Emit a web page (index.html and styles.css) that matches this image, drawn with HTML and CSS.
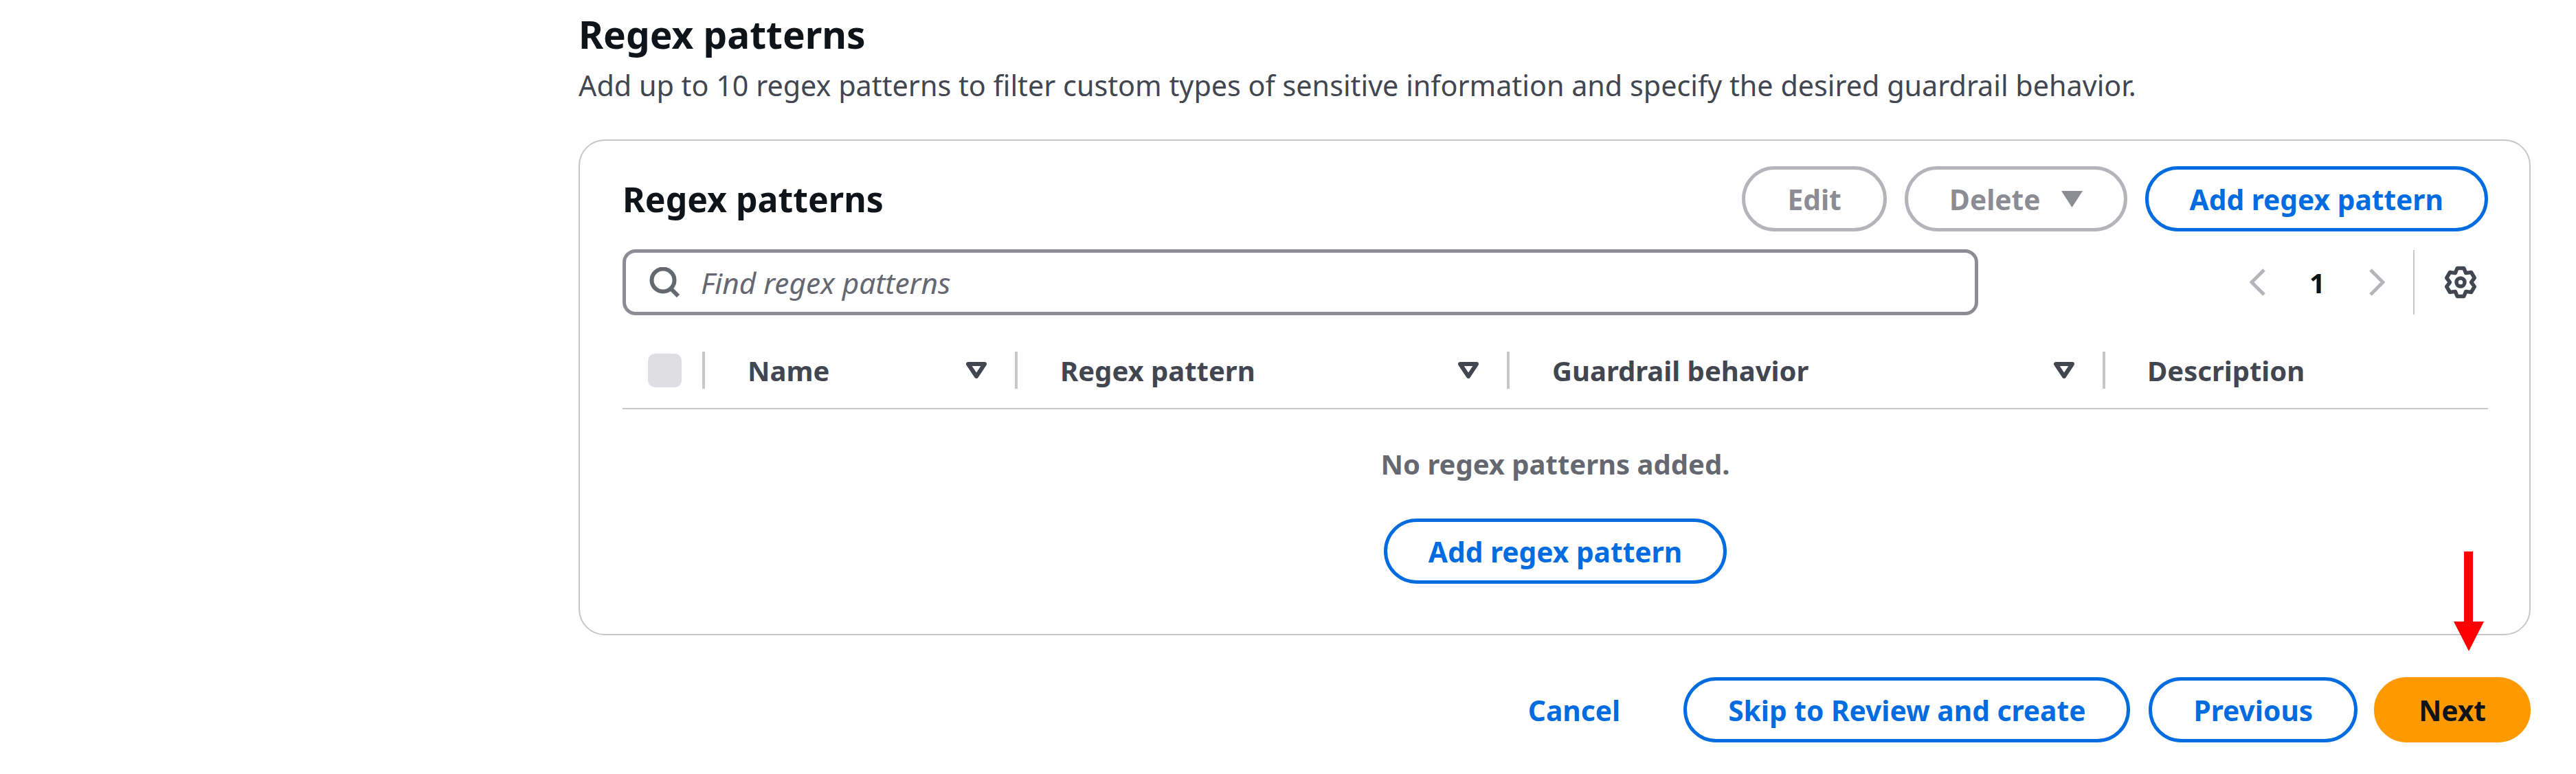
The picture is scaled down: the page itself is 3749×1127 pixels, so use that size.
FILE: index.html
```html
<!DOCTYPE html>
<html lang="en">
<head>
  <meta charset="UTF-8" />
  <title>Regex patterns</title>
  <link rel="stylesheet" href="styles.css">
</head>
<body>
  <main class="page">
    <h2 class="section-title">Regex patterns</h2>
    <p class="section-desc">Add up to 10 regex patterns to filter custom types of sensitive information and specify the desired guardrail behavior.</p>

    <section class="card">
      <div class="card-head">
        <h3 class="card-title">Regex patterns</h3>
        <div class="actions">
          <button class="btn btn-off btn-edit" type="button">Edit</button>
          <button class="btn btn-off btn-delete" type="button">Delete
            <svg class="caret" viewBox="0 0 31 24"><path d="M0 0h31L15.500 24z"/></svg>
          </button>
          <button class="btn" type="button">Add regex pattern</button>
        </div>
      </div>

      <div class="tools">
        <div class="search">
          <svg class="search-icon" viewBox="0 0 44 44"><circle cx="20" cy="19" r="16.500"/><path d="M31 31l11 11"/></svg>
          <span class="placeholder">Find regex patterns</span>
        </div>
        <div class="pager">
          <svg class="chevron" viewBox="0 0 24 40"><path d="M21 2L3 20l18 18"/></svg>
          <span class="page-num">1</span>
          <svg class="chevron" viewBox="0 0 24 40"><path d="M3 2l18 18L3 38"/></svg>
        </div>
        <div class="settings">
          <svg class="gear" viewBox="0 0 48 48">
            <polygon points="19.200,3.500 28.800,3.500 31.750,10.600 39.500,9.500 44.300,17.700 39.500,24 44.300,30.300 39.500,38.500 31.750,37.400 28.800,44.500 19.200,44.500 16.250,37.400 8.500,38.500 3.700,30.300 8.500,24 3.700,17.700 8.500,9.500 16.250,10.600"/>
            <circle cx="24" cy="24" r="6"/>
          </svg>
        </div>
      </div>

      <div class="table-head">
        <div class="th th-check"><span class="checkbox"></span></div>
        <div class="th">Name <svg class="sort" viewBox="0 0 30 24"><path d="M3 3h24L15 21z"/></svg></div>
        <div class="th">Regex pattern <svg class="sort" viewBox="0 0 30 24"><path d="M3 3h24L15 21z"/></svg></div>
        <div class="th">Guardrail behavior <svg class="sort" viewBox="0 0 30 24"><path d="M3 3h24L15 21z"/></svg></div>
        <div class="th th-desc">Description</div>
      </div>

      <div class="empty">
        <p class="empty-text">No regex patterns added.</p>
        <button class="btn" type="button">Add regex pattern</button>
      </div>
    </section>

    <div class="footer">
      <a class="cancel" href="#">Cancel</a>
      <button class="btn" type="button">Skip to Review and create</button>
      <button class="btn" type="button">Previous</button>
      <button class="btn btn-primary" type="button">Next</button>
    </div>
  </main>

  <svg class="arrow" viewBox="0 0 44 145"><path d="M15 0h13v102h16l-22 43L0 102h15z"/></svg>
</body>
</html>
```

FILE: styles.css
```css
* {
  box-sizing: border-box;
}

body {
  margin: 0;
  background-color: #fff;
  color: #0f141a;
  font-family: "Noto Sans", sans-serif;
  height: 1127px;
  overflow: hidden;
  position: relative;
}

.page {
  margin-left: 842px;
  width: 2841px;
  padding-top: 14px;
}

.section-title {
  margin: 0;
  font-size: 55px;
  line-height: 72px;
  font-weight: 700;
}

.section-desc {
  margin: 14px 0 0;
  font-size: 41.300px;
  line-height: 48px;
  color: #424650;
}

.card {
  margin-top: 55px;
  height: 722px;
  border: 2px solid #c6c6cd;
  border-radius: 38px;
  padding: 37px 60px 0 62px;
}

.card-head {
  display: flex;
  justify-content: space-between;
  align-items: center;
}

.card-title {
  margin: 0;
  font-size: 50px;
  font-weight: 700;
}

.actions {
  display: flex;
  gap: 26px;
}

.btn {
  display: inline-flex;
  align-items: center;
  justify-content: center;
  height: 95px;
  padding: 0 60px;
  border: 5px solid #006ce0;
  border-radius: 48px;
  background: #fff;
  color: #006ce0;
  font-family: inherit;
  font-size: 40.700px;
  font-weight: 700;
}

.btn-off {
  border-color: #b4b4bb;
  color: #8c8c94;
}

.btn-edit {
  width: 211px;
  padding: 0;
}

.btn-delete {
  gap: 30px;
}

.caret {
  width: 31px;
  height: 24px;
  fill: #8c8c94;
}

.btn-primary {
  border-color: #ff9900;
  background: #ff9900;
  color: #0f141a;
}

.tools {
  display: flex;
  align-items: center;
  margin-top: 26px;
}

.search {
  display: flex;
  align-items: center;
  width: 1973px;
  height: 96px;
  padding-left: 34px;
  border: 5px solid #8c8c94;
  border-radius: 19px;
}

.search-icon {
  width: 44px;
  height: 44px;
  fill: none;
  stroke: #656871;
  stroke-width: 6;
}

.placeholder {
  margin-left: 31px;
  font-size: 42.400px;
  font-style: italic;
  color: #656871;
}

.pager {
  display: flex;
  align-items: center;
  margin-left: 395px;
  width: 238px;
}

.chevron {
  width: 24px;
  height: 40px;
  fill: none;
  stroke: #b4b4bb;
  stroke-width: 5;
}

.page-num {
  width: 149px;
  text-align: center;
  font-size: 40px;
  font-weight: 700;
}

.settings {
  display: flex;
  align-items: center;
  height: 94px;
  padding-left: 43px;
  border-left: 2px solid #c6c6cd;
}

.gear {
  width: 48px;
  height: 48px;
  fill: none;
  stroke: #424650;
  stroke-width: 5.500;
  stroke-linejoin: round;
}

.table-head {
  display: grid;
  grid-template-columns: 120px 455px 716px 867px 1fr;
  margin-top: 53px;
  padding-bottom: 28px;
  border-bottom: 2px solid #c6c6cd;
}

.th {
  display: flex;
  align-items: center;
  justify-content: space-between;
  height: 54px;
  padding: 0 41px 0 62px;
  border-right: 4px solid #c6c6cd;
  font-size: 40px;
  font-weight: 700;
  color: #424650;
}

.th-check {
  padding: 0 0 0 37px;
  justify-content: flex-start;
}

.th-desc {
  padding-left: 61px;
  border-right: none;
}

.checkbox {
  width: 49px;
  height: 49px;
  border-radius: 10px;
  background-color: #dedee3;
}

.sort {
  width: 30px;
  height: 24px;
  fill: none;
  stroke: #424650;
  stroke-width: 6;
  stroke-linejoin: round;
}

.empty {
  display: flex;
  flex-direction: column;
  align-items: center;
}

.empty-text {
  margin: 56px 0 0;
  font-size: 40px;
  line-height: 48px;
  font-weight: 700;
  color: #656871;
}

.empty .btn {
  margin-top: 55px;
}

.footer {
  display: flex;
  justify-content: flex-end;
  align-items: center;
  gap: 27px;
  margin-top: 61px;
}

.footer .btn-primary {
  margin-left: -3px;
}

.cancel {
  margin-right: 65px;
  font-size: 40.700px;
  font-weight: 700;
  color: #006ce0;
  text-decoration: none;
}

.arrow {
  position: absolute;
  left: 3571px;
  top: 803px;
  width: 44px;
  height: 145px;
  fill: #ff0000;
}
```
